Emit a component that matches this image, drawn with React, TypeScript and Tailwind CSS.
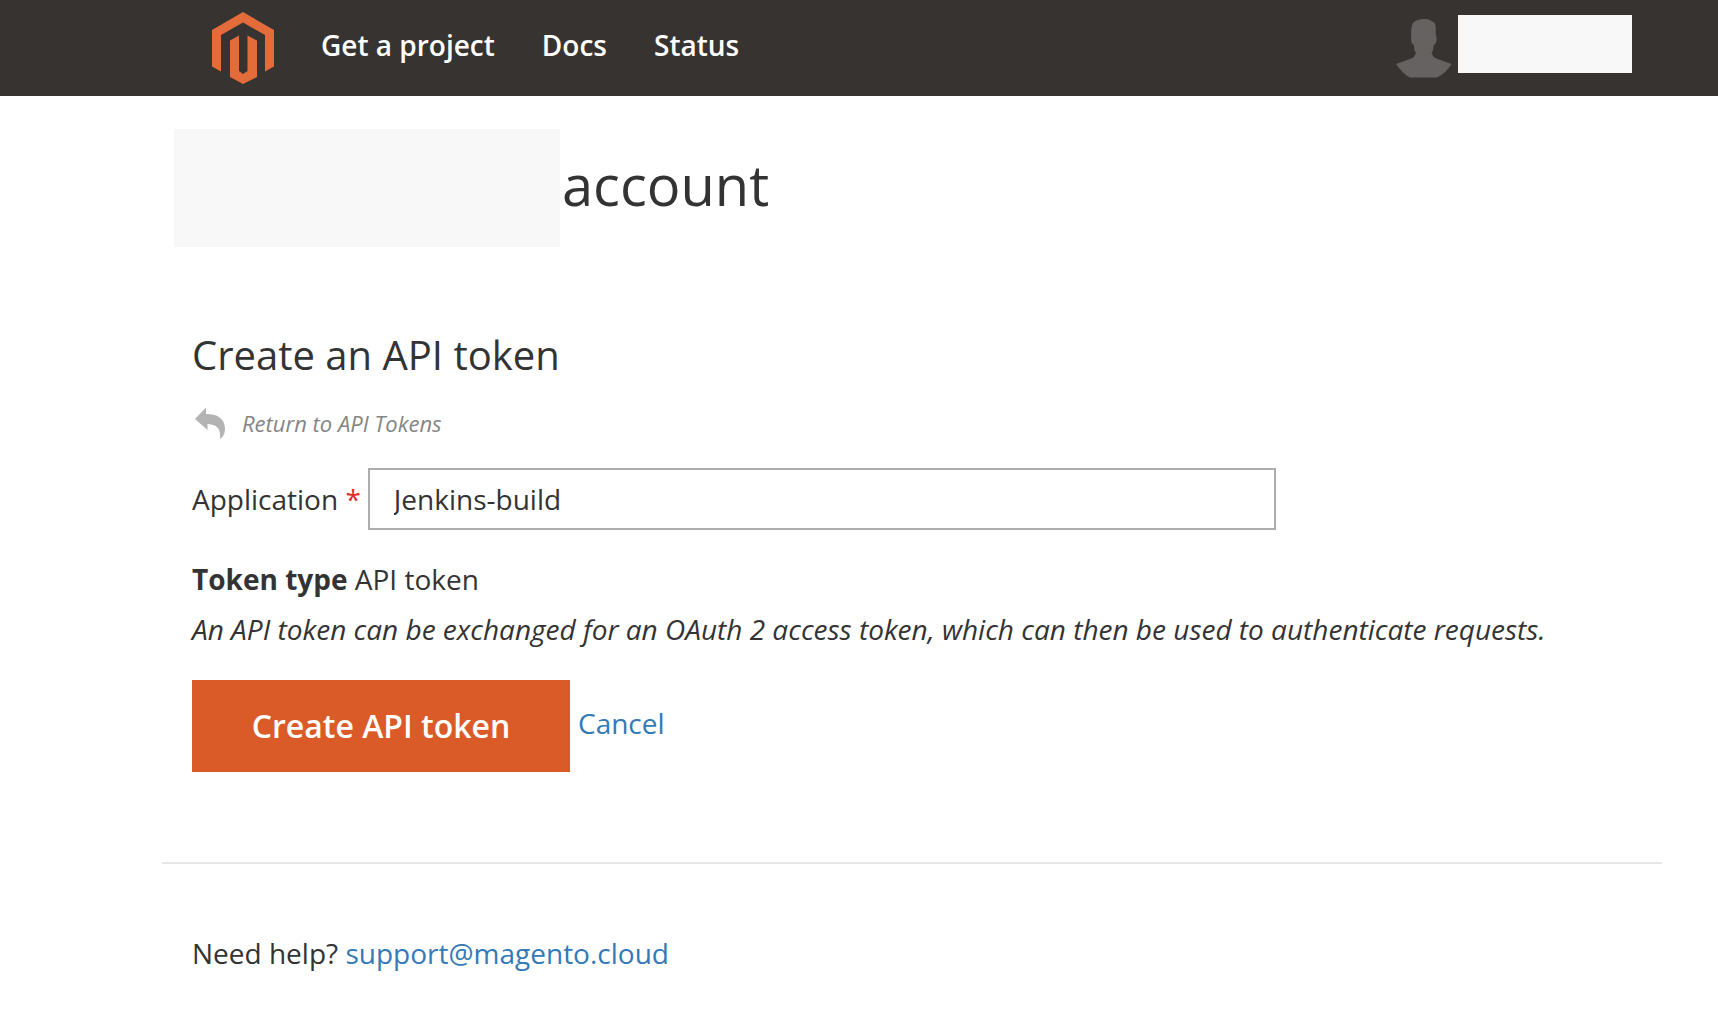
const navLinks = ["Get a project", "Docs", "Status"];

function Logo() {
  return (
    <svg viewBox="0 0 62 72" className="h-[72px] w-[62px]" fill="#e36c3a" aria-hidden="true">
      <path d="M31 0 62 18V54.500L53 59.500V23L31 10.500 9 23V59.500L0 54.500V18Z" />
      <path d="M18 28.500 27 23.500V59L31 62 35.500 59V23.500L45 28.500V65L31 72 18 65Z" />
    </svg>
  );
}

function Avatar() {
  return (
    <svg viewBox="0 0 56 60" className="h-[60px] w-14" fill="#666261" aria-hidden="true">
      <path d="M28 1C22 1 17 3 15.800 8C15 11 15.200 14 15.200 18C14.800 22 15.500 26 18 27.500C18 31 18.500 33 20 35C19 37 18 39.500 16.500 40L0 46C4 52 9 57 14 59.500H41C47 56.500 52 52 55.500 46L39 40C37.500 39.500 36.500 37 35.500 35C37 33 37.500 31 37.500 27.500C40 26 41 23 40.500 19C39.500 17 39.800 15 39.800 12C40 7 39 4 36 3.500C34 1.500 31 1 28 1Z" />
    </svg>
  );
}

function ReturnArrow() {
  return (
    <svg viewBox="0 0 32 32" className="h-8 w-8" fill="#b3b3b3" aria-hidden="true">
      <path d="M0 12 11 0.500V7C22 7 30 11 30 22C30 26 28.500 29 26 31.500H25C26 23 23 17.500 12.500 17V23Z" />
    </svg>
  );
}

export default function App() {
  return (
    <div className="min-h-screen bg-white font-['Open_Sans',sans-serif] text-[28px] leading-10 text-[#333333]">
      <header className="flex h-24 items-center bg-[#373330] pl-[212px] pr-[86px]">
        <a href="#" aria-label="Magento home">
          <Logo />
        </a>
        <nav className="flex gap-[47px] pb-1.5 pl-[47px] font-semibold text-white">
          {navLinks.map((label) => (
            <a key={label} href="#" className="whitespace-nowrap">
              {label}
            </a>
          ))}
        </nav>
        <div className="ml-auto flex items-center gap-1.5">
          <Avatar />
          <div className="mb-2 h-[58px] w-[174px] bg-[#f8f8f8]" />
        </div>
      </header>

      <main className="pl-[192px] pr-14">
        <div className="-ml-[18px] mt-[33px] flex">
          <div className="h-[118px] w-[386px] bg-[#f8f8f8]" />
          <h1 className="pl-0.5 pt-6 text-[56px] leading-[62px]">account</h1>
        </div>

        <h2 className="mt-[86px] text-[40px] leading-[44px]">Create an API token</h2>
        <a href="#" className="mt-[30px] flex w-fit items-center gap-[15px] pl-[3px] text-[22px] leading-8 text-[#858585] italic">
          <ReturnArrow />
          Return to API Tokens
        </a>

        <form onSubmit={(e) => e.preventDefault()}>
          <div className="mt-[29px] flex items-center gap-[7px]">
            <label htmlFor="application" className="whitespace-nowrap">
              Application <span className="font-medium text-[#e02b27]">*</span>
            </label>
            <input
              id="application"
              type="text"
              required
              defaultValue="Jenkins-build"
              className="h-[62px] w-[908px] max-w-full border-2 border-[#adadad] bg-white px-6 outline-none"
            />
          </div>
          <p className="mt-[29px]">
            <strong className="font-bold">Token type</strong> API token
          </p>
          <p className="mt-2.5 italic">
            An API token can be exchanged for an OAuth 2 access token, which can then be used to authenticate requests.
          </p>
          <div className="mt-[31px] flex items-center gap-2">
            <button type="submit" className="h-[92px] w-[378px] bg-[#db5b28] text-[32px] font-semibold text-white">
              Create API token
            </button>
            <a href="#" className="mb-1.5 text-[#337ab7]">
              Cancel
            </a>
          </div>
        </form>
      </main>

      <footer className="mt-[90px] mr-14 ml-[162px] border-t-2 border-[#e5e5e5] px-[30px] pt-[69px]">
        Need help?{" "}
        <a href="mailto:support@magento.cloud" className="text-[#337ab7]">
          support@magento.cloud
        </a>
      </footer>
    </div>
  );
}
